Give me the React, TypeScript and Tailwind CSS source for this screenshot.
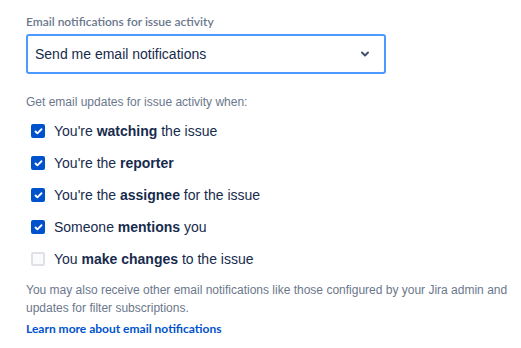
import { Check, ChevronDown } from 'lucide-react';

const options = [
  { before: "You're ", bold: 'watching', after: ' the issue', checked: true },
  { before: "You're the ", bold: 'reporter', after: '', checked: true },
  { before: "You're the ", bold: 'assignee', after: ' for the issue', checked: true },
  { before: 'Someone ', bold: 'mentions', after: ' you', checked: true },
  { before: 'You ', bold: 'make changes', after: ' to the issue', checked: false },
];

export default function App() {
  return (
    <div className="w-[521px] h-[348px] bg-white font-['Liberation_Sans',sans-serif] text-[#172B4D]">
      <div className="pl-[26px] pt-[14px] w-[516px]">
        <label className="block text-[12px] leading-4 font-semibold font-['Lato',sans-serif] text-[#6B778C]">
          Email notifications for issue activity
        </label>
        <div className="mt-1 w-[360px] h-10 border-2 border-[#4C9AFF] rounded-[3px] flex items-center justify-between pl-[7px] pr-[13px]">
          <span className="text-[14px]">Send me email notifications</span>
          <ChevronDown className="w-3 h-3 text-[#42526E]" strokeWidth={4} />
        </div>

        <p className="mt-5 text-[12px] leading-4 text-[#6B778C]">Get email updates for issue activity when:</p>

        <div className="mt-[5px] flex flex-col">
          {options.map((o) => (
            <div key={o.bold} className="h-8 flex items-center pl-[5px]">
              {o.checked ? (
                <span className="w-[14px] h-[14px] rounded-[2px] bg-[#0052CC] flex items-center justify-center">
                  <Check className="w-[9px] h-[9px] text-white" strokeWidth={5} />
                </span>
              ) : (
                <span className="w-[14px] h-[14px] rounded-[2px] border-2 border-[#DFE1E6] bg-[#FAFBFC]" />
              )}
              <span className="ml-[9px] text-[14px]">
                {o.before}
                <b className="font-bold">{o.bold}</b>
                {o.after}
              </span>
            </div>
          ))}
        </div>

        <p className="mt-[6px] text-[12px] leading-[18px] text-[#6B778C]">
          You may also receive other email notifications like those configured by your Jira admin and updates for
          filter subscriptions.
        </p>
        <a className="block mt-[3px] text-[12px] leading-[18px] font-bold font-['Lato',sans-serif] text-[#0052CC]">
          Learn more about email notifications
        </a>
      </div>
    </div>
  );
}
